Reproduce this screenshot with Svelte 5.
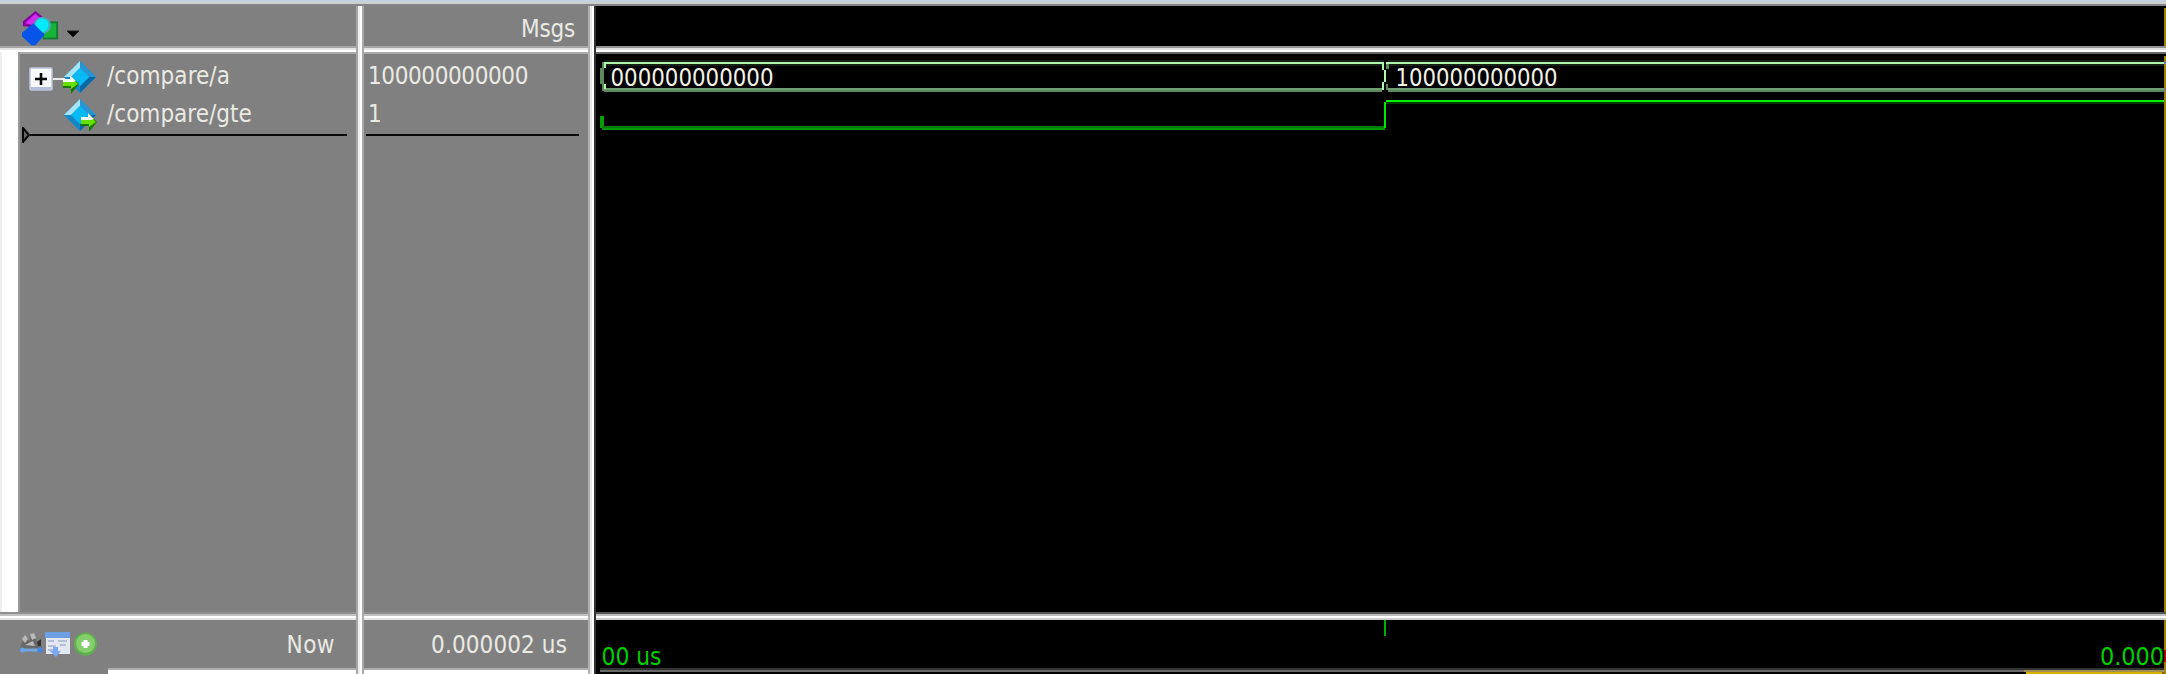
<script>
  const signals = [
    { name: '/compare/a', value: '100000000000', bus: true, track: '0.05px' },
    { name: '/compare/gte', value: '1', bus: false, track: '0px' }
  ];
</script>

{#snippet diamond(output)}
  <svg class="diamond" width="36" height="34" viewBox="0 0 36 34">
    <path d="M18 1 34 17 18 33 2 17Z" fill="#14a0dc" />
    <path d="M18 1 2 17 9 17 18 8Z" fill="#a5e3f7" />
    <path d="M18 1 34 17 27 17 18 8Z" fill="#2695d4" />
    <path d="M2 17 18 33 18 26 9 17Z" fill="#1687c6" />
    <path d="M34 17 18 33 18 26 27 17Z" fill="#0768a5" />
    <path d="M18 8 27 17 18 26 9 17Z" fill="#08baf3" />
    <g transform={output ? 'translate(18 0)' : ''}>
      <path d="M1 20H8V15L17 24 9 34V28H1Z" fill="#167800" />
      <path d="M1 20H8V16L16 24 9 29V26H1Z" fill="#65df00" />
      <path d="M1 19H8V15L14 21 11 22H1Z" fill="#f2fff0" />
    </g>
  </svg>
{/snippet}

<div class="window">
  <div class="top-edge"></div>

  <header class="cell tools">
    <svg class="objects" width="38" height="38" viewBox="0 0 40 38">
      <path d="M1 16V11L14 0 24 8 12 17Z" fill="#8500a0" />
      <path d="M3 13 14 3 20 8 12 15Z" fill="#d12cec" />
      <rect x="22" y="11" width="16" height="19" fill="#137b35" />
      <rect x="23" y="13" width="13" height="15" fill="#18b43a" />
      <circle cx="21.5" cy="15" r="9" fill="#4ba9b9" />
      <circle cx="21" cy="15" r="7" fill="#00edff" />
      <path d="M12 13 24 25 14 36H10L0 27V23Z" fill="#0755e8" />
    </svg>
    <svg class="caret" width="14" height="8" viewBox="0 0 14 8"><path d="M1 1H13L7 7Z" fill="#000" stroke="#222" /></svg>
  </header>
  <div class="v-edge left-edge"></div>
  <header class="cell msgs"><span class="msgs-label">Msgs</span></header>
  <div class="v-edge right-edge"></div>
  <div class="scope-header"><i></i></div>

  <div class="h-edge upper a"></div>
  <div class="h-edge upper b"></div>
  <div class="h-edge upper dark c"></div>

  <section class="names">
    <div class="gutter"></div>
    <div class="name-list">
      {#each signals as signal}
        <div class="row">
          <div class="expander">
            {#if signal.bus}
              <svg width="36" height="24" viewBox="0 0 36 24">
                <rect x="1" y="1" width="22" height="22" rx="1" fill="#f7f9ff" stroke="#bbc3dc" stroke-width="1.5" />
                <path d="M2 20H22V23H2Z" fill="#b5bedb" />
                <path d="M6 12H18M12 6V18" stroke="#080808" stroke-width="2.6" />
                <path d="M24 12H36" stroke="#ededed" stroke-width="2" />
              </svg>
            {/if}
          </div>
          {@render diamond(!signal.bus)}
          <span class="name" style="letter-spacing: {signal.track}">{signal.name}</span>
        </div>
      {/each}
      <div class="marker">
        <svg width="8" height="16" viewBox="0 0 8 16"><path d="M1 1 7 8 1 15Z" fill="#666" stroke="#090909" stroke-width="2" /></svg>
        <hr />
      </div>
    </div>
  </section>

  <section class="values">
    {#each signals as signal}
      <div class="row value">{signal.value}</div>
    {/each}
    <div class="marker"><hr /></div>
  </section>

  <section class="waves">
    <svg width="1570" height="558" viewBox="596 54 1570 558" shape-rendering="crispEdges">
      <g fill="#142014">
        <rect x="604" y="60" width="780" height="6" />
        <rect x="1388" y="60" width="776" height="6" />
      </g>
      <g fill="#b0f5b0">
        <rect x="604" y="62" width="780" height="2" />
        <rect x="1386" y="62" width="778" height="2" />
        <rect x="1382" y="64" width="2" height="6" />
        <rect x="1384" y="70" width="2" height="12" />
        <rect x="1382" y="82" width="2" height="8" />
      </g>
      <g fill="#5c885c">
        <rect x="602" y="62" width="2" height="6" />
        <rect x="600" y="68" width="4" height="16" />
        <rect x="602" y="84" width="2" height="7" />
        <rect x="1386" y="64" width="3" height="5" />
        <rect x="1386" y="84" width="2" height="6" />
        <rect x="604" y="90" width="778" height="2" />
        <rect x="1388" y="90" width="776" height="2" />
      </g>
      <g fill="#70a070">
        <rect x="604" y="88" width="778" height="2" />
        <rect x="1388" y="88" width="776" height="2" />
      </g>
      <g fill="#b0f5b0">
        <rect x="604" y="64" width="2" height="4" />
        <rect x="604" y="84" width="2" height="5" />
      </g>
      <rect x="600" y="116" width="4" height="12" fill="#00a000" />
      <rect x="602" y="126" width="783" height="2" fill="#007c00" />
      <rect x="602" y="128" width="783" height="2" fill="#009a00" />
      <rect x="1384" y="102" width="2" height="26" fill="#00e800" />
      <rect x="1386" y="100" width="778" height="2" fill="#00f000" />
      <rect x="1386" y="102" width="778" height="2" fill="#003800" />
      <rect x="2164" y="56" width="2" height="556" fill="#a08000" />
      <rect x="2164" y="62" width="2" height="2" fill="#7070c0" />
      <rect x="2164" y="88" width="2" height="4" fill="#907868" />
      <text x="610.5" y="86" textLength="163" lengthAdjust="spacingAndGlyphs">000000000000</text>
      <text x="1395.500" y="86" textLength="162" lengthAdjust="spacingAndGlyphs">100000000000</text>
    </svg>
  </section>

  <div class="h-edge lower a"></div>
  <div class="h-edge lower b"></div>
  <div class="h-edge lower dark c"></div>

  <footer class="now">
    <div class="status">
      <svg width="78" height="28" viewBox="0 0 78 28">
        <path d="M0 17 5 5 9 10 13 2 17 11 22 16 20 19H2Z" fill="#686868" />
        <path d="M2 8 5 4 8 8 5 12ZM10 3 14 2 16 7 12 9ZM5 14 13 10 15 15Z" fill="#b9b9b9" />
        <path d="M17 11 21 8V15H18Z" fill="#333" />
        <path d="M2 19H21" stroke="#73a7df" stroke-width="3" />
        <circle cx="2.5" cy="19" r="2.5" fill="#65a5e9" /><circle cx="20" cy="19" r="2.7" fill="#4685df" />
        <rect x="26" y="1" width="24" height="22" fill="#e3e7ef" />
        <rect x="25" y="1" width="25" height="6" fill="#6d9fe3" />
        <path d="M28 10H34M38 10H47M28 15H36M40 14H46M28 19H33" stroke="#a4b3d0" stroke-width="1.5" />
        <path d="M33 16H38V20H41L36 26 30 20H33Z" fill="#7da7f0" />
        <circle cx="65.5" cy="13" r="11.5" fill="#60ae50" />
        <circle cx="65.5" cy="12.5" r="9.5" fill="#84cf6c" />
        <path d="M61.500 13H69.500M65.500 9V17" stroke="#fff" stroke-width="4" />
      </svg>
      <span class="now-label">Now</span>
    </div>
    <div class="ledge"></div>
  </footer>
  <footer class="time">
    <div class="status"><span class="time-label">0.000002 us</span></div>
    <div class="ledge"></div>
  </footer>
  <footer class="timeline">
    <svg width="1570" height="54" viewBox="596 620 1570 54">
      <g shape-rendering="crispEdges">
        <rect x="1384" y="620" width="2" height="16" fill="#00b000" />
        <rect x="600" y="668" width="1566" height="2" fill="#333" />
        <rect x="600" y="670" width="1566" height="2" fill="#686868" />
        <rect x="2164" y="620" width="2" height="54" fill="#a08000" />
        <rect x="2164" y="650" width="2" height="12" fill="#a00800" />
        <rect x="2024" y="670" width="142" height="2" fill="#a09050" />
        <rect x="2026" y="672" width="136" height="2" fill="#d8b000" />
        <rect x="2162" y="672" width="2" height="2" fill="#806800" />
      </g>
      <text class="tick" x="601.500" y="665" textLength="60" lengthAdjust="spacingAndGlyphs">00 us</text>
      <text class="tick" x="2100" y="665" textLength="64" lengthAdjust="spacingAndGlyphs">0.000</text>
    </svg>
  </footer>
</div>

<style>
  :global(body) { margin: 0; background: #808080; overflow: hidden; }
  .window {
    display: grid;
    width: 2166px;
    height: 674px;
    grid-template-columns: 356px 8px 224px 8px 1570px;
    grid-template-rows: 6px 40px 8px 558px 8px 54px;
    background: #808080;
    color: #eaeae5;
    font: 24px "DejaVu Sans Condensed", "DejaVu Sans", sans-serif;
    font-stretch: condensed;
    white-space: nowrap;
  }
  .top-edge { grid-area: 1 / 1 / 2 / 6; background: linear-gradient(#c4d2e0 2px, #cecece 2px 4px, #858585 4px); }
  .tools { grid-area: 2 / 1; display: flex; align-items: flex-start; padding: 4px 0 0 22px; }
  .caret { margin: 20px 0 0 6px; }
  .msgs { grid-area: 2 / 3; display: flex; justify-content: flex-end; padding-right: 13px; line-height: 46px; }
  .msgs-label { letter-spacing: -.2px; }
  .scope-header { grid-area: 2 / 5; display: flex; justify-content: flex-end; background: #000; }
  .scope-header i { width: 2px; margin-top: 2px; background: #a08000; }
  .v-edge { grid-row: 2 / 7; z-index: 1; }
  .left-edge { grid-column: 2; background: linear-gradient(90deg, #a7a7a7 2px, #eee 2px 4px, #fff 4px 6px, #a9a9a9 6px); }
  .right-edge { grid-column: 4; background: linear-gradient(90deg, #b0b0b0 2px, #e9e9e9 2px 4px, #fff 4px 6px, #303030 6px); }
  .a { grid-column: 1; }
  .b { grid-column: 3; }
  .c { grid-column: 5; }
  .upper { grid-row: 3; background: linear-gradient(#a5a5a5 2px, #e5e5e5 2px 4px, #fff 4px 6px, #aaa 6px); }
  .upper.dark { background: linear-gradient(#929292 2px, #e0e0e0 2px 4px, #fff 4px 6px, #666 6px); }
  .lower { grid-row: 5; background: linear-gradient(#909090 2px, #c0c0c0 2px 4px, #fff 4px 6px, #e5e5e5 6px); }
  .lower.dark { background: linear-gradient(#555 2px, #bdbdbd 2px 4px, #fff 4px 6px, #ccc 6px); }
  .names { grid-area: 4 / 1; display: flex; }
  .gutter { width: 20px; margin-top: -2px; background: linear-gradient(90deg, #eee 2px, #fff 2px 18px, #999 18px); }
  .name-list { width: 336px; padding-top: 4px; }
  .row { height: 38px; display: flex; align-items: center; line-height: 38px; }
  .expander { width: 42px; display: flex; justify-content: flex-end; align-items: center; }
  .expander svg { margin: 3px -3px 0 0; }
  .diamond { flex: none; }
  .name { margin-left: 9px; position: relative; top: -1px; }
  .marker { height: 16px; display: flex; align-items: center; margin: -7px 0 0 2px; }
  .marker hr { width: 317px; height: 2px; margin: 0; border: 0; background: #080808; }
  .values { grid-area: 4 / 3; padding-top: 4px; }
  .value { padding-left: 4px; letter-spacing: -.4px; position: relative; top: -1px; }
  .values .marker hr { width: 213px; }
  .waves { grid-area: 4 / 5; background: #000; }
  .waves svg, .timeline svg { display: block; }
  text { font: 24px "DejaVu Sans Condensed", "DejaVu Sans", sans-serif; font-stretch: condensed; fill: #f2f2e9; }
  .tick { fill: #00cf00; }
  .now, .time { display: flex; flex-direction: column; }
  .now { grid-area: 6 / 1; }
  .time { grid-area: 6 / 3; }
  .status { height: 48px; display: flex; justify-content: space-between; line-height: 50px; }
  .now .status { padding: 0 21px 0 20px; }
  .now-label { letter-spacing: .5px; }
  .now svg { margin-top: 11px; }
  .time .status { justify-content: flex-end; padding-right: 21px; }
  .time-label { letter-spacing: .1px; }
  .ledge { height: 4px; border-top: 2px solid #b0b0b0; background: #fff; }
  .now .ledge { margin-left: 108px; }
  .timeline { grid-area: 6 / 5; background: #000; }
</style>
